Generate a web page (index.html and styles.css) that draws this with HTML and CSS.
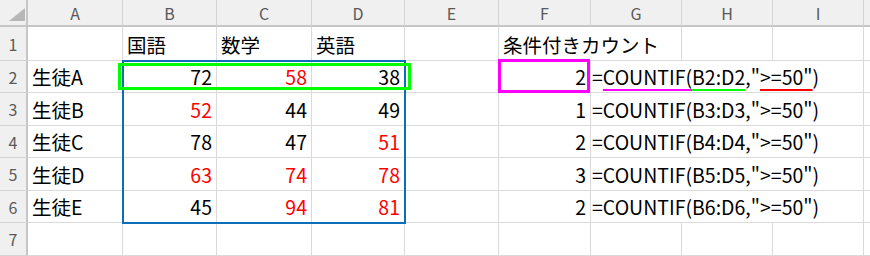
FILE: index.html
```html
<!DOCTYPE html>
<html lang="ja">
<head>
<meta charset="utf-8">
<link rel="stylesheet" href="styles.css">
</head>
<body>
<div class="sheet">
  <div class="corner"><svg width="16" height="13" viewBox="0 0 16 13"><polygon points="16,0 16,13 0,13" fill="#b7b7b7"/></svg></div>
  <div class="ch">A</div><div class="ch">B</div><div class="ch">C</div><div class="ch">D</div><div class="ch">E</div><div class="ch">F</div><div class="ch">G</div><div class="ch">H</div><div class="ch">I</div><div class="ch"></div>

  <div class="rh">1</div>
  <div class="c"></div><div class="c">国語</div><div class="c">数学</div><div class="c">英語</div><div class="c"></div>
  <div class="c span2">条件付きカウント</div><div class="c"></div><div class="c"></div><div class="c"></div>

  <div class="rh">2</div>
  <div class="c">生徒A</div><div class="c n">72</div><div class="c n red">58</div><div class="c n">38</div><div class="c"></div>
  <div class="c n">2</div><div class="c span3 f">=<span class="ul ul-m">COUNTIF(</span><span class="ul ul-g">B2:D2</span>,"<span class="ul ul-r">&gt;=50"</span>)</div><div class="c"></div>

  <div class="rh">3</div>
  <div class="c">生徒B</div><div class="c n red">52</div><div class="c n">44</div><div class="c n">49</div><div class="c"></div>
  <div class="c n">1</div><div class="c span3 f">=COUNTIF(B3:D3,"&gt;=50")</div><div class="c"></div>

  <div class="rh">4</div>
  <div class="c">生徒C</div><div class="c n">78</div><div class="c n">47</div><div class="c n red">51</div><div class="c"></div>
  <div class="c n">2</div><div class="c span3 f">=COUNTIF(B4:D4,"&gt;=50")</div><div class="c"></div>

  <div class="rh">5</div>
  <div class="c">生徒D</div><div class="c n red">63</div><div class="c n red">74</div><div class="c n red">78</div><div class="c"></div>
  <div class="c n">3</div><div class="c span3 f">=COUNTIF(B5:D5,"&gt;=50")</div><div class="c"></div>

  <div class="rh">6</div>
  <div class="c">生徒E</div><div class="c n">45</div><div class="c n red">94</div><div class="c n red">81</div><div class="c"></div>
  <div class="c n">2</div><div class="c span3 f">=COUNTIF(B6:D6,"&gt;=50")</div><div class="c"></div>

  <div class="rh">7</div>
  <div class="c"></div><div class="c"></div><div class="c"></div><div class="c"></div><div class="c"></div>
  <div class="c"></div><div class="c"></div><div class="c"></div><div class="c"></div><div class="c"></div>

  <div class="rh"></div>
  <div class="c"></div><div class="c"></div><div class="c"></div><div class="c"></div><div class="c"></div>
  <div class="c"></div><div class="c"></div><div class="c"></div><div class="c"></div><div class="c"></div>

  <div class="box box-blue"></div>
  <div class="box box-green"></div>
  <div class="box box-magenta"></div>
</div>
</body>
</html>
```

FILE: styles.css
```css
html, body {
  margin: 0;
  padding: 0;
  background: #ffffff;
}

.sheet {
  position: relative;
  width: 870px;
  height: 256px;
  overflow: hidden;
  display: grid;
  grid-template-columns: 28px 95px 94px 95px 93px 94px 92px 91px 91px 91px 1fr;
  grid-template-rows: 27px 34px 32px 33px 32px 33px 32px 33px 20px;
  font-family: "Noto Sans CJK JP", "Noto Sans", sans-serif;
  font-size: 19.5px;
  color: #000;
}

.sheet > div {
  box-sizing: border-box;
}

.corner {
  background: #f0f0f0;
  border-right: 2px solid #c6c6c6;
  border-bottom: 2px solid #c6c6c6;
  display: flex;
  align-items: flex-end;
  justify-content: flex-end;
  padding: 0 1px 4px 0;
}

.corner svg {
  display: block;
}

.ch {
  background: #f0f0f0;
  border-right: 1px solid #d4d4d4;
  border-bottom: 2px solid #c6c6c6;
  color: #595959;
  font-size: 16px;
  display: flex;
  align-items: center;
  justify-content: center;
  line-height: 1;
  padding-top: 1px;
}

.rh {
  background: #f0f0f0;
  border-right: 2px solid #c6c6c6;
  border-bottom: 1px solid #d4d4d4;
  color: #595959;
  font-size: 16px;
  display: flex;
  align-items: center;
  justify-content: center;
  line-height: 1;
}

.c {
  border-right: 1px solid #dadada;
  border-bottom: 1px solid #dadada;
  display: flex;
  align-items: flex-end;
  padding: 0 4px 3px 4px;
  line-height: 24px;
  white-space: nowrap;
}

.n {
  justify-content: flex-end;
}

.red {
  color: #ff0000;
}

.span2 {
  grid-column: span 2;
  overflow: visible;
}

.span3 {
  grid-column: span 3;
}

.f {
  padding-left: 1px;
}

.ul {
  text-decoration: underline;
  text-decoration-thickness: 2px;
  text-underline-offset: 4px;
  text-decoration-skip-ink: none;
}

.ul-m { text-decoration-color: #ff00ff; }
.ul-g { text-decoration-color: #00ff00; }
.ul-r { text-decoration-color: #ff0000; }

.box {
  position: absolute;
  box-sizing: border-box;
  pointer-events: none;
}

.box-blue {
  left: 122px;
  top: 60px;
  width: 284px;
  height: 164px;
  border: 2px solid #0a6ebd;
}

.box-green {
  left: 118px;
  top: 63px;
  width: 293px;
  height: 27px;
  border: 3px solid #00ff00;
}

.box-magenta {
  left: 498px;
  top: 59px;
  width: 92px;
  height: 34px;
  border: 3px solid #ff00ff;
}
```
